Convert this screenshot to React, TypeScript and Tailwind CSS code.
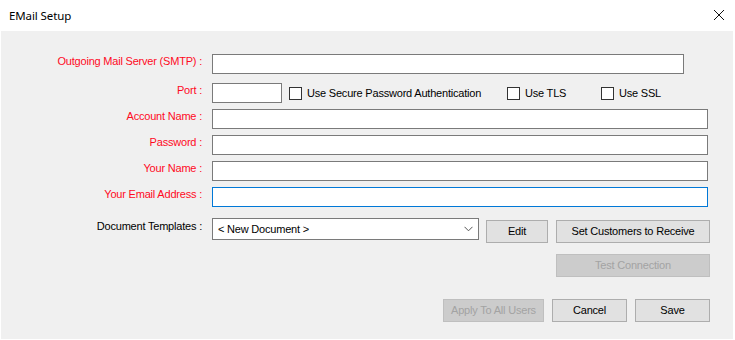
import React from "react";

const font = { fontFamily: '"Liberation Sans", Arial, sans-serif', letterSpacing: "-0.2px" };

function Label({ children, red = true }: { children: React.ReactNode; red?: boolean }) {
  return (
    <div
      className={`w-[201px] shrink-0 text-right text-[11px] leading-[13px] -mt-[6px] whitespace-nowrap ${red ? "text-[#ff0a1e]" : "text-black"}`}
    >
      {children}
    </div>
  );
}

function TextBox({ w, focused = false }: { w: string; focused?: boolean }) {
  return (
    <div
      className={`${w} h-[20px] ml-[10px] bg-white border ${focused ? "border-[#0078d7]" : "border-[#7a7a7a]"}`}
    />
  );
}

function CheckBox({ label, w }: { label: string; w: string }) {
  return (
    <div className={`${w} flex items-center`}>
      <div className="w-[13px] h-[13px] border border-[#333333] bg-white shrink-0" />
      <span className="ml-[5px] text-[11px] text-black whitespace-nowrap">{label}</span>
    </div>
  );
}

function Btn({ children, w, disabled = false }: { children: React.ReactNode; w: string; disabled?: boolean }) {
  return (
    <div
      className={`${w} h-[23px] flex items-center justify-center text-[11px] border ${
        disabled ? "bg-[#cccccc] border-[#bfbfbf] text-[#a3a3a3]" : "bg-[#e1e1e1] border-[#adadad] text-black"
      }`}
    >
      {children}
    </div>
  );
}

export default function App() {
  return (
    <div className="w-[735px] h-[340px] bg-white flex flex-col overflow-hidden" style={font}>
      <div className="h-[31px] flex items-center justify-between pl-[9px] pr-[10px] shrink-0">
        <span
          className="text-[11.5px] text-black tracking-[-0.1px]"
          style={{ fontFamily: '"Noto Sans", "Open Sans", sans-serif' }}
        >
          EMail Setup
        </span>
        <svg width="12" height="12" viewBox="0 0 12 12" className="mt-[-1px]">
          <path d="M1 1 L11 11 M11 1 L1 11" stroke="#111" strokeWidth="1" />
        </svg>
      </div>
      <div className="ml-[1px] w-[732px] h-[308px] bg-[#f0f0f0] flex flex-col pt-[23px]">
        <div className="flex items-center">
          <Label>Outgoing Mail Server (SMTP) :</Label>
          <TextBox w="w-[472px]" />
        </div>
        <div className="flex items-center mt-[9px]">
          <Label>Port :</Label>
          <TextBox w="w-[70px]" />
          <div className="ml-[7px] flex items-center">
            <CheckBox label="Use Secure Password Authentication" w="w-[218px]" />
            <CheckBox label="Use TLS" w="w-[94px]" />
            <CheckBox label="Use SSL" w="w-[80px]" />
          </div>
        </div>
        <div className="flex items-center mt-[6px]">
          <Label>Account Name :</Label>
          <TextBox w="w-[496px]" />
        </div>
        <div className="flex items-center mt-[6px]">
          <Label>Password :</Label>
          <TextBox w="w-[496px]" />
        </div>
        <div className="flex items-center mt-[6px]">
          <Label>Your Name :</Label>
          <TextBox w="w-[496px]" />
        </div>
        <div className="flex items-center mt-[6px]">
          <Label>Your Email Address :</Label>
          <TextBox w="w-[496px]" focused />
        </div>
        <div className="flex items-start mt-[11px]">
          <div className="w-[201px] shrink-0 text-right text-[11px] leading-[13px] mt-[2px] text-black">
            Document Templates :
          </div>
          <div className="w-[267px] h-[22px] ml-[10px] bg-white border border-[#7a7a7a] flex items-center justify-between pl-[5px] pr-[5px]">
            <span className="text-[11px] text-black">&lt; New Document &gt;</span>
            <svg width="9" height="6" viewBox="0 0 9 6">
              <path d="M0.5 0.8 L4.5 4.8 L8.5 0.8" stroke="#555" strokeWidth="1" fill="none" />
            </svg>
          </div>
          <div className="ml-[7px] mt-[2px]">
            <Btn w="w-[62px]">Edit</Btn>
          </div>
          <div className="ml-[8px] mt-[2px]">
            <Btn w="w-[154px]">Set Customers to Receive</Btn>
          </div>
        </div>
        <div className="flex justify-start mt-[11px] pl-[555px]">
          <Btn w="w-[154px]" disabled>
            Test Connection
          </Btn>
        </div>
        <div className="flex mt-[22px] pl-[442px] gap-[8px]">
          <Btn w="w-[101px]" disabled>
            Apply To All Users
          </Btn>
          <Btn w="w-[75px]">Cancel</Btn>
          <Btn w="w-[75px]">Save</Btn>
        </div>
      </div>
    </div>
  );
}
